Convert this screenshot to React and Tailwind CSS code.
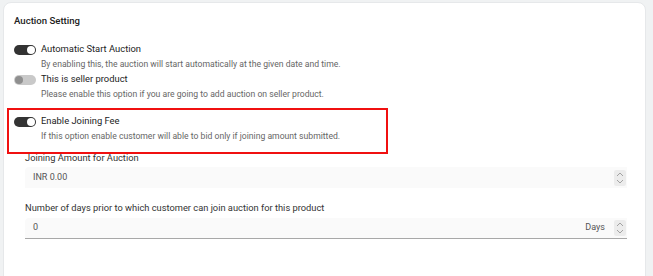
import React from 'react';

const FONT = { fontFamily: 'Roboto, "Liberation Sans", sans-serif' };

function Toggle({ on }) {
  return on ? (
    <span className="inline-flex items-center justify-end w-[22px] h-[10px] rounded-full bg-[#333] px-[1px] shrink-0">
      <span className="w-[8px] h-[8px] rounded-full bg-white" />
    </span>
  ) : (
    <span className="inline-flex items-center justify-start w-[22px] h-[10px] rounded-full bg-[#c9c9c9] px-[1px] shrink-0">
      <span className="w-[8px] h-[8px] rounded-full bg-[#8f8f8f]" />
    </span>
  );
}

function SwitchRow({ on, title, desc, className = '' }) {
  return (
    <div className={className}>
      <div className="flex items-center gap-[5px] h-[15px]">
        <Toggle on={on} />
        <span className="text-[9.4px] text-[#222]">{title}</span>
      </div>
      <div className="pl-[27px] text-[8.65px] leading-[15px] text-[#666]">{desc}</div>
    </div>
  );
}

function Spinner() {
  return (
    <span className="flex flex-col items-center justify-center w-[12px] h-[16px] rounded-[2px] bg-[#ececec]">
      <svg width="8" height="5" viewBox="0 0 8 5" fill="none" stroke="#9a9a9a" strokeWidth="0.9">
        <path d="M1 4L4 1L7 4" />
      </svg>
      <svg width="8" height="5" viewBox="0 0 8 5" fill="none" stroke="#9a9a9a" strokeWidth="0.9" className="mt-[2px]">
        <path d="M1 1L4 4L7 1" />
      </svg>
    </span>
  );
}

export default function App() {
  return (
    <div className="w-[653px] h-[276px] bg-[#f0f2f3] overflow-hidden pt-[2px] pl-[3px]" style={FONT}>
      <div className="w-[643px] h-[290px] bg-white border border-[#e6e8ea] rounded-lg pt-[11px] px-[10px]">
        <h2 className="text-[9.6px] font-medium leading-[14px] text-[#222]">Auction Setting</h2>

        <SwitchRow
          on
          className="mt-[14px]"
          title="Automatic Start Auction"
          desc="By enabling this, the auction will start automatically at the given date and time."
        />
        <SwitchRow
          title="This is seller product"
          desc="Please enable this option if you are going to add auction on seller product."
        />

        <div className="relative mt-[12px]">
          <SwitchRow
            on
            title="Enable Joining Fee"
            desc="If this option enable customer will able to bid only if joining amount submitted."
          />
          <span className="absolute top-[-6px] left-[-7px] w-[381px] h-[46px] border-2 border-[#f01010] pointer-events-none" />
        </div>

        <div className="ml-[11px] w-[602px]">
          <div className="mt-[6px] text-[9.3px] leading-[15px] text-[#333]">Joining Amount for Auction</div>
          <div className="mt-[2px] h-[21px] flex items-center justify-between bg-[#fafafa] rounded-tl-[4px] pl-[8px] pr-[1px]">
            <span className="text-[9px] text-[#555]">INR 0.00</span>
            <Spinner />
          </div>

          <div className="mt-[12px] text-[9.3px] leading-[15px] text-[#333]">
            Number of days prior to which customer can join auction for this product
          </div>
          <div className="mt-[3px] h-[21px] flex items-center bg-[#fafafa] rounded-tl-[4px] border-b border-[#a8a8a8] pl-[8px] pr-[1px]">
            <span className="flex-1 text-[9px] text-[#555]">0</span>
            <span className="text-[9px] text-[#555] mr-[9px]">Days</span>
            <Spinner />
          </div>
        </div>
      </div>
    </div>
  );
}
